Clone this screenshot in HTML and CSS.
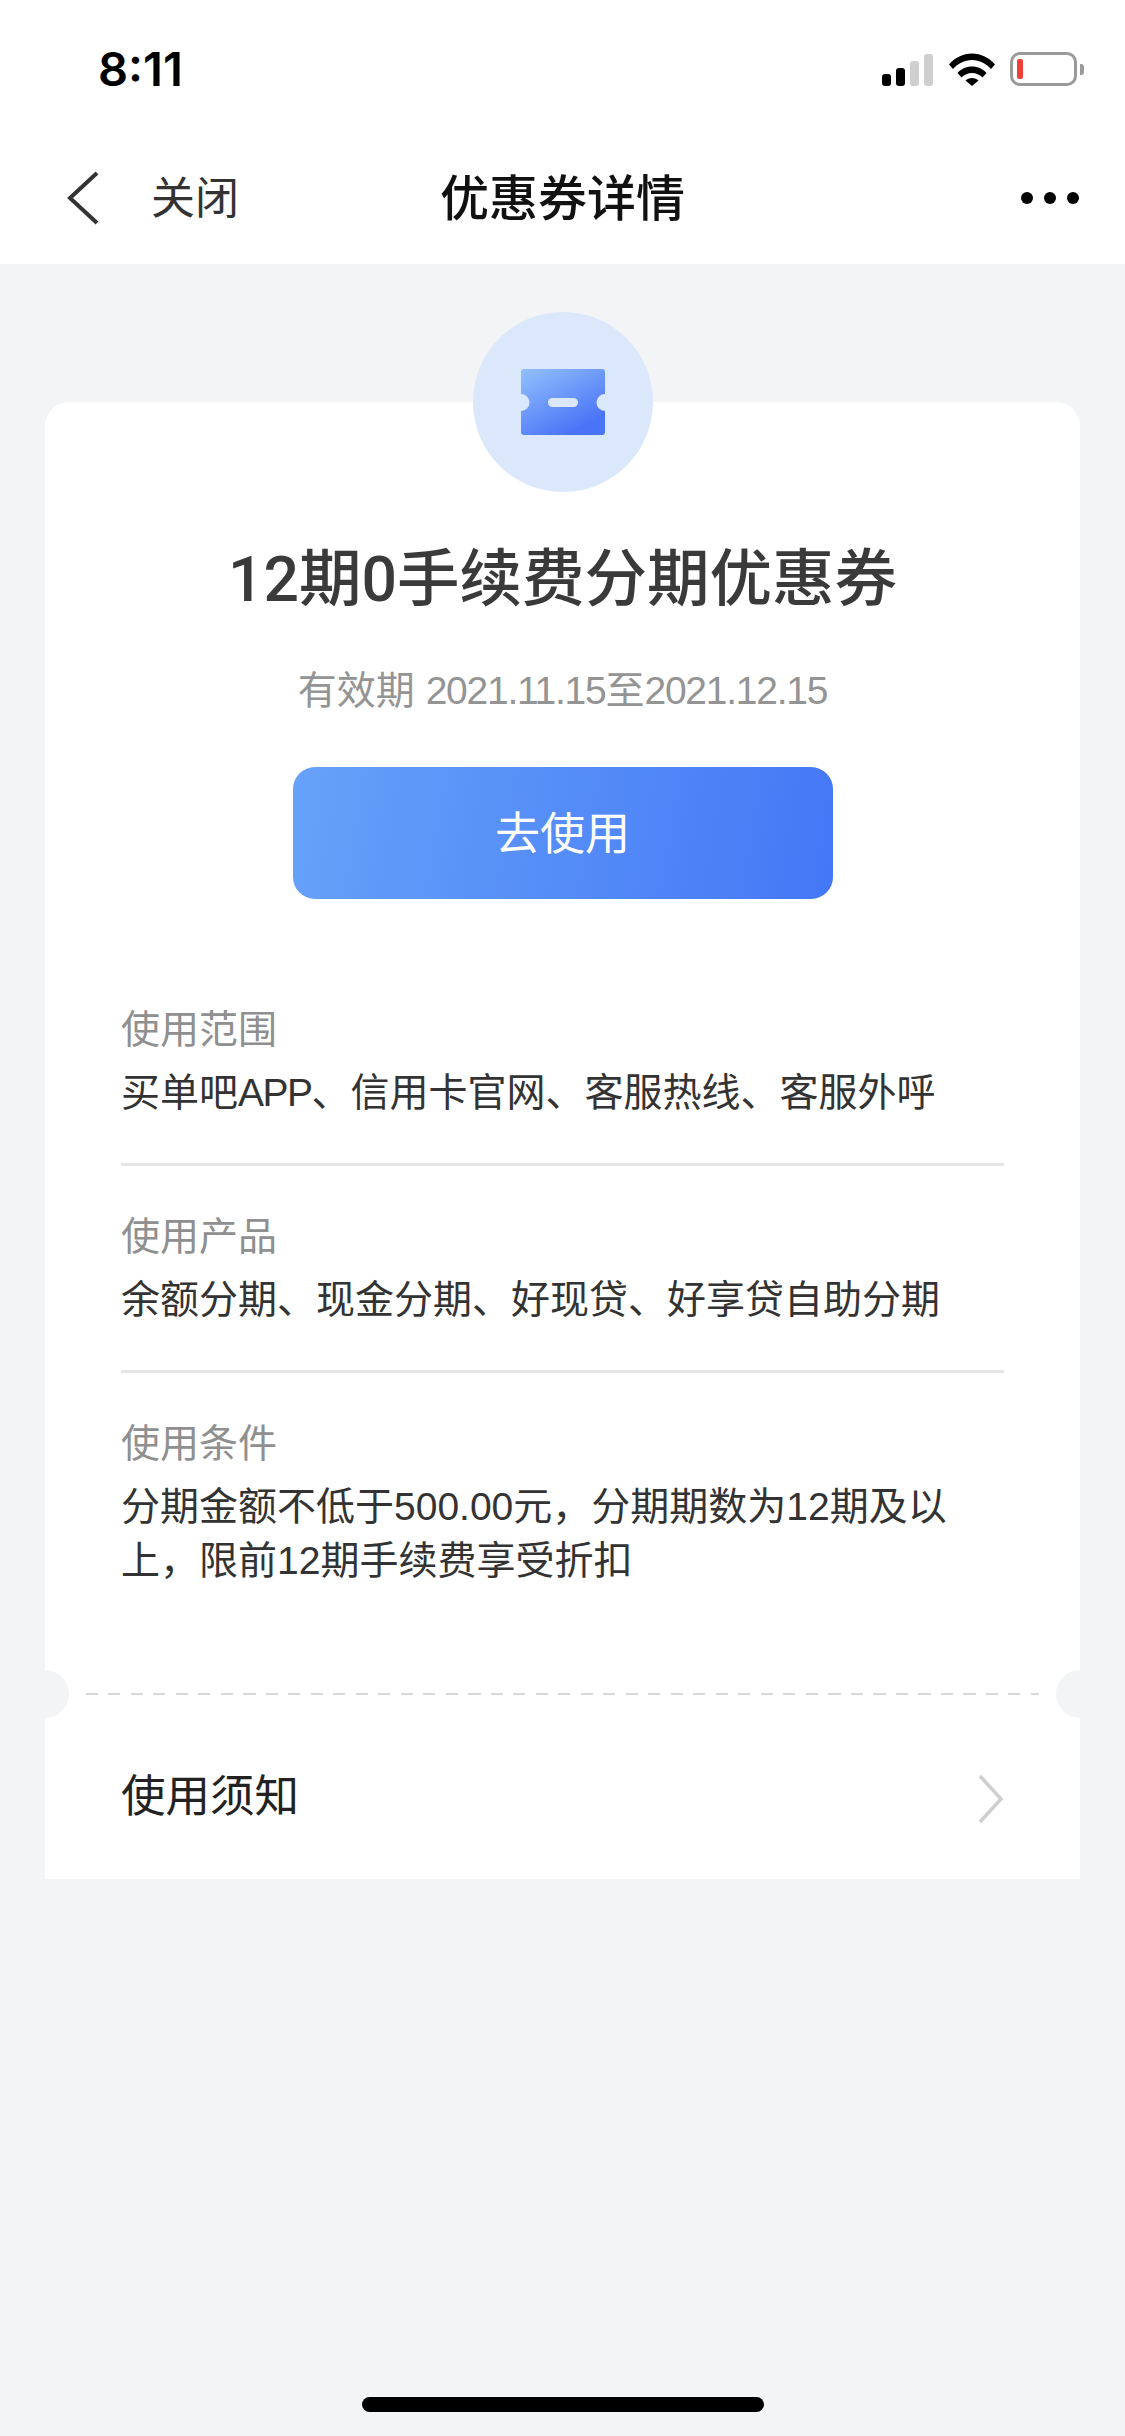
FILE: index.html
```html
<!DOCTYPE html>
<html lang="zh-CN">
<head>
  <meta charset="UTF-8" />
  <title>优惠券详情</title>
  <link rel="stylesheet" href="styles.css">
</head>
<body>

<div class="top">
  <div class="status">
    <span class="time">8:11</span>
    <div class="status-icons">
      <div class="signal">
        <i class="bar b1"></i><i class="bar b2"></i><i class="bar b3 off"></i><i class="bar b4 off"></i>
      </div>
      <svg class="wifi" width="46" height="33" viewBox="0 0 46 33">
        <path d="M0 11.5C6 4.5 14 .5 23 .5s17 4 23 11l-4 4.5C37 10.5 30.5 7 23 7S9 10.5 4 16z" fill="#000"/>
        <path d="M8.5 20C12 16 17 13.5 23 13.5S34 16 37.5 20l-4 4.5C30.5 21.5 27 20 23 20s-7.5 1.5-10.5 4.5z" fill="#000"/>
        <path d="M16.5 27.5C18 26 20.5 25 23 25s5 1 6.5 2.5L23 33z" fill="#000"/>
      </svg>
      <div class="battery"><i class="battery-level"></i></div>
      <i class="battery-nub"></i>
    </div>
  </div>
  <div class="nav">
    <div class="nav-left">
      <svg class="back" width="32" height="54" viewBox="0 0 32 54">
        <path d="M30 2L3 27l27 25" fill="none" stroke="#333" stroke-width="4"/>
      </svg>
      <span class="close">关闭</span>
    </div>
    <h1 class="nav-title">优惠券详情</h1>
    <div class="more"><i></i><i></i><i></i></div>
  </div>
</div>

<div class="content">
  <div class="badge">
    <svg width="84" height="66" viewBox="0 0 84 66">
      <defs>
        <linearGradient id="ticketFill" x1="0.1" y1="0" x2="0.7" y2="0.9">
          <stop offset="0" stop-color="#8fbdfb"/>
          <stop offset="1" stop-color="#4a74f7"/>
        </linearGradient>
      </defs>
      <path d="M3 0h78a3 3 0 0 1 3 3v22a8.5 8.5 0 0 0 0 17v21a3 3 0 0 1-3 3H3a3 3 0 0 1-3-3V42a8.5 8.5 0 0 0 0-17V3a3 3 0 0 1 3-3z" fill="url(#ticketFill)"/>
      <rect x="27" y="29" width="30" height="9" rx="4.5" fill="#dbe7fb"/>
    </svg>
  </div>

  <div class="card">
    <div class="card-main">
      <h2 class="coupon-title">12期0手续费分期优惠券</h2>
      <p class="valid">有效期 <span class="date">2021.11.15</span>至<span class="date">2021.12.15</span></p>
      <button class="use-btn"><span>去使用</span></button>

      <div class="info">
        <div class="info-label">使用范围</div>
        <div class="info-text">买单吧<span class="num">APP</span>、信用卡官网、客服热线、客服外呼</div>
      </div>
      <div class="info">
        <div class="info-label">使用产品</div>
        <div class="info-text">余额分期、现金分期、好现贷、好享贷自助分期</div>
      </div>
      <div class="info">
        <div class="info-label">使用条件</div>
        <div class="info-text">分期金额不低于500.00元，分期期数为12期及以上，限前12期手续费享受折扣</div>
      </div>
    </div>

    <div class="tear">
      <i class="notch left"></i>
      <div class="dashes"></div>
      <i class="notch right"></i>
    </div>

    <div class="notice">
      <span class="notice-text">使用须知</span>
      <svg width="26" height="48" viewBox="0 0 26 48">
        <path d="M2 1l21 23L2 47" fill="none" stroke="#cfcfcf" stroke-width="3.5"/>
      </svg>
    </div>
  </div>
</div>

<div class="home-bar"></div>

</body>
</html>
```

FILE: styles.css
```css
* {
  box-sizing: border-box;
}

html, body {
  height: 100%;
}

body {
  margin: 0;
  display: flex;
  flex-direction: column;
  background: #f3f4f6;
  color: #333;
  font-family: "Liberation Sans", "Noto Sans CJK SC", sans-serif;
}

.top {
  height: 264px;
  background: #fff;
}

.status {
  height: 132px;
  padding: 52px 41px 0 98px;
  display: flex;
  justify-content: space-between;
  align-items: flex-start;
}

.time {
  font-family: "Inter", sans-serif;
  font-size: 47px;
  font-weight: 600;
  line-height: 34px;
  color: #000;
}

.status-icons {
  display: flex;
  align-items: center;
  height: 34px;
}

.signal {
  display: flex;
  align-items: flex-end;
  gap: 5px;
  height: 33px;
  margin-right: 16px;
}

.bar {
  width: 9px;
  border-radius: 3px;
  background: #000;
}

.bar.off {
  background: #cfcfcf;
}

.b1 { height: 12px; }
.b2 { height: 18px; }
.b3 { height: 25px; }
.b4 { height: 32px; }

.wifi {
  margin-right: 15px;
}

.battery {
  width: 67px;
  height: 34px;
  padding: 4px;
  border: 3px solid #9a9a9a;
  border-radius: 10px;
}

.battery-level {
  display: block;
  width: 6px;
  height: 20px;
  border-radius: 2px;
  background: #ee4037;
}

.battery-nub {
  width: 4px;
  height: 11px;
  margin-left: 3px;
  border-radius: 0 3px 3px 0;
  background: #9a9a9a;
}

.nav {
  height: 132px;
  padding: 0 46px 0 67px;
  display: flex;
  align-items: center;
  justify-content: space-between;
  position: relative;
}

.nav-left {
  display: flex;
  align-items: center;
  gap: 52px;
}

.close {
  padding-bottom: 7px;
  font-size: 44px;
  color: #333;
}

.nav-title {
  position: absolute;
  left: 0;
  right: 0;
  margin: 0;
  padding-bottom: 7px;
  text-align: center;
  font-size: 49px;
  font-weight: 500;
  color: #111;
}

.more {
  display: flex;
  gap: 11px;
}

.more i {
  width: 12px;
  height: 12px;
  border-radius: 50%;
  background: #000;
}

.content {
  flex: 1;
  padding: 48px 45px 0;
  display: flex;
  flex-direction: column;
  align-items: center;
}

.badge {
  width: 180px;
  height: 180px;
  margin-bottom: -90px;
  border-radius: 50%;
  background: #dbe7fb;
  display: flex;
  align-items: center;
  justify-content: center;
  position: relative;
  z-index: 1;
}

.card {
  width: 100%;
  background: #fff;
  border-radius: 24px 24px 0 0;
}

.card-main {
  padding: 138px 76px 82px;
  display: flex;
  flex-direction: column;
}

.coupon-title {
  margin: 0;
  text-align: center;
  font-family: "Roboto", "Noto Sans CJK SC", sans-serif;
  font-size: 62.5px;
  font-weight: 500;
  line-height: 80px;
  color: #3a3a3a;
}

.valid {
  margin: 46px 0 0;
  text-align: center;
  font-size: 39px;
  line-height: 50px;
  color: #949494;
}

.date {
  letter-spacing: -1.25px;
}

.num {
  letter-spacing: -1.5px;
}

.use-btn {
  width: 540px;
  height: 132px;
  margin: 51px auto 60px;
  padding: 0 0 5px;
  border: none;
  border-radius: 22px;
  background: linear-gradient(100deg, #66a2f9, #4477f6);
  color: #fff;
  font-family: inherit;
  font-size: 45px;
}

.info {
  padding: 44px 0 43px;
  border-bottom: 3px solid #e6e6e6;
}

.info:last-child {
  padding-bottom: 0;
  border-bottom: none;
}

.info-label {
  margin-bottom: 9px;
  font-size: 39px;
  line-height: 54px;
  color: #8f8f8f;
}

.info-text {
  font-size: 39px;
  line-height: 54px;
  color: #333;
}

.tear {
  height: 48px;
  display: flex;
  align-items: center;
  position: relative;
}

.dashes {
  flex: 1;
  margin: 0 41px;
  height: 2px;
  background: repeating-linear-gradient(90deg, #d8d8d8 0 12px, transparent 12px 22.5px);
}

.notch {
  position: absolute;
  top: 0;
  width: 24px;
  height: 48px;
  background: #f3f4f6;
}

.notch.left {
  left: 0;
  border-radius: 0 24px 24px 0;
}

.notch.right {
  right: 0;
  border-radius: 24px 0 0 24px;
}

.notice {
  height: 161px;
  padding: 0 76px;
  display: flex;
  align-items: center;
  justify-content: space-between;
  font-size: 44.5px;
  color: #222;
}

.notice-text {
  padding-bottom: 12px;
}

.home-bar {
  flex-shrink: 0;
  align-self: center;
  width: 402px;
  height: 15px;
  margin-bottom: 24px;
  border-radius: 8px;
  background: #000;
}
```
